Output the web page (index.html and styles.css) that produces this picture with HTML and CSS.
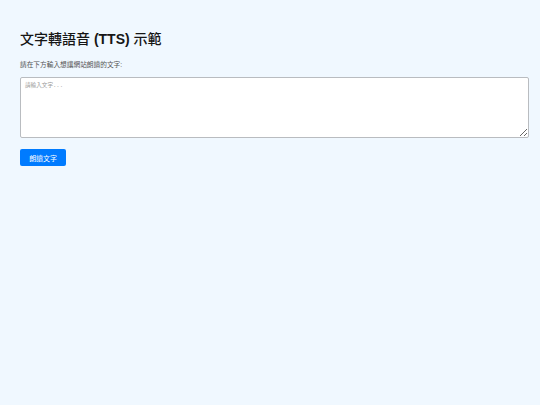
FILE: index.html
```html
<!DOCTYPE html>
<html>
<head>
<meta charset="utf-8">
<title>文字轉語音 (TTS) 示範</title>
<link rel="stylesheet" href="styles.css">
</head>
<body>
<main class="page">
  <h1 class="title"><span class="cjk">文字轉語音</span> (TTS) <span class="cjk">示範</span></h1>
  <p class="label">請在下方輸入想讓網站朗讀的文字:</p>
  <textarea class="input" placeholder="請輸入文字..."></textarea>
  <div class="actions">
    <button class="btn" type="button">朗讀文字</button>
  </div>
</main>
</body>
</html>
```
FILE: styles.css
```css
html, body {
  margin: 0;
  padding: 0;
  background: #f0f8ff;
}
body {
  font-family: "Liberation Sans", Arial, "Noto Sans CJK TC", sans-serif;
  color: #222;
}
.page {
  padding: 30px 11px 20px 20px;
  display: flex;
  flex-direction: column;
}
.title {
  margin: 0;
  font-size: 14px;
  line-height: 19px;
  font-weight: bold;
  color: #161616;
}
.title .cjk {
  font-weight: 500;
}
.label {
  margin: 12px 0 0;
  font-size: 6.7px;
  line-height: 8px;
  color: #555;
}
.input {
  margin-top: 8px;
  box-sizing: border-box;
  width: 100%;
  height: 61px;
  padding: 4px;
  border: 1px solid #b9bcc0;
  border-radius: 2px;
  background: #fff;
  font-family: "Liberation Mono", "Noto Sans CJK TC", monospace;
  font-size: 5.6px;
  line-height: 8px;
  resize: vertical;
}
.input::placeholder {
  color: #9a9a9a;
}
.actions {
  margin-top: 11px;
  display: flex;
}
.btn {
  height: 17px;
  width: 46px;
  padding: 0;
  border: none;
  border-radius: 2px;
  background: #007bff;
  color: #fff;
  font-family: "Liberation Sans", Arial, "Noto Sans CJK TC", sans-serif;
  font-size: 6.9px;
  cursor: pointer;
}
```
